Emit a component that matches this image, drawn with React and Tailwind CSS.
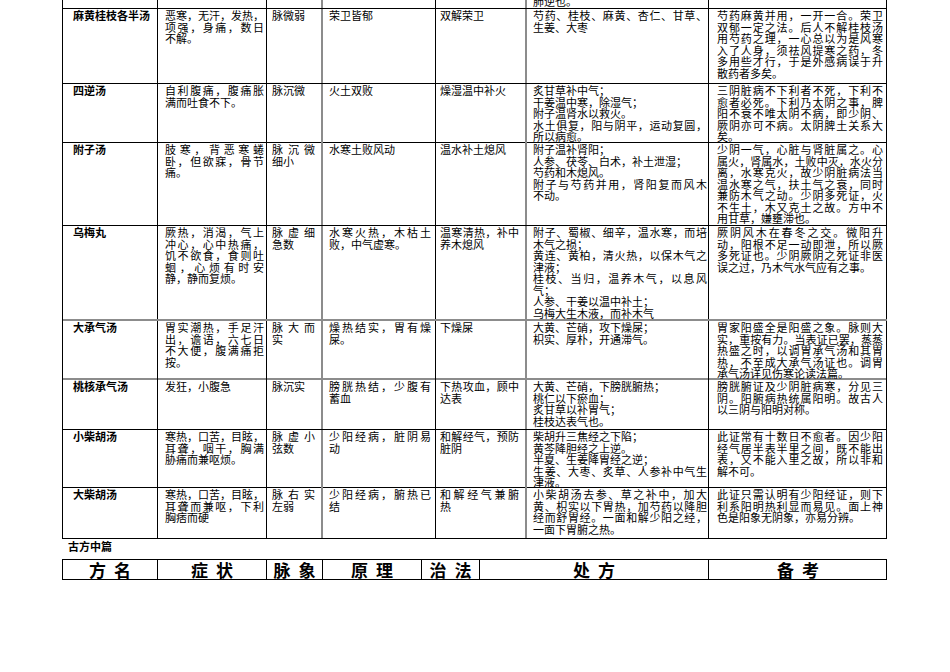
const col = [
  "border-r border-black pl-[10px] pr-[2px] font-bold",
  "border-r border-black pl-[7px] pr-[2px]",
  "border-r-2 border-r-[#8c8c8c] pl-[5px] pr-[6px]",
  "border-r border-black pl-[6px] pr-[4px]",
  "border-r-2 border-r-[#8c8c8c] pl-[4px] pr-[6px]",
  "border-r border-black pl-[6px] pr-[1px]",
  "border-r border-black pl-[8px] pr-[3px]",
];

// each cell: list of paragraphs, each paragraph a list of lines
const rows = [
  {
    h: "h-[75px] border-b border-black",
    cells: [
      [["麻黄桂枝各半汤"]],
      [["恶寒，无汗，发热，", "项强，身痛，数日", "不解。"]],
      [["脉微弱"]],
      [["荣卫皆郁"]],
      [["双解荣卫"]],
      [["芍药、桂枝、麻黄、杏仁、甘草、", "生姜、大枣"]],
      [["芍药麻黄并用，一开一合。荣卫", "双郁一定之法。后人不解桂枝汤", "用芍药之理，一心总以为是风寒", "入了人身，须祛风提寒之药，冬", "多用些才行，于是外感病误于升", "散药者多矣。"]],
    ],
  },
  {
    h: "h-[59px] border-b border-black",
    cells: [
      [["四逆汤"]],
      [["自利腹痛，腹痛胀", "满而吐食不下。"]],
      [["脉沉微"]],
      [["火土双败"]],
      [["燥湿温中补火"]],
      [["炙甘草补中气；"], ["干姜温中寒，除湿气；"], ["附子温肾水以救火。"], ["水土俱复，阳与阴平，运动复圆，", "所以病愈。"]],
      [["三阴脏病不下利者不死，下利不", "愈者必死。下利乃太阴之事，脾", "阳不衰不唯太阴不病，即少阴、", "厥阴亦可不病。太阴脾土关系大", "矣。"]],
    ],
  },
  {
    h: "h-[83px] border-b border-black",
    cells: [
      [["附子汤"]],
      [["肢寒，背恶寒蜷", "卧，但欲寐，骨节", "痛。"]],
      [["脉沉微", "细小"]],
      [["水寒土败风动"]],
      [["温水补土熄风"]],
      [["附子温补肾阳；"], ["人参、茯苓、白术，补土泄湿；"], ["芍药和木熄风。"], ["附子与芍药并用，肾阳复而风木", "不动。"]],
      [["少阴一气，心脏与肾脏属之。心", "属火，肾属水，土败中灭，水火分", "离，水寒克火，故少阴脏病法当", "温水寒之气，扶土气之衰，同时", "兼防木气之动。少阴多死证，火", "不生土，木又克土之故。方中不", "用甘草，嫌壅滞也。"]],
    ],
  },
  {
    h: "h-[95px] border-b-2 border-b-[#8c8c8c]",
    cells: [
      [["乌梅丸"]],
      [["厥热，消渴，气上", "冲心，心中热痛，", "饥不欲食，食则吐", "蛔，心烦有时安", "静，静而复烦。"]],
      [["脉虚细", "急数"]],
      [["水寒火热，木枯土", "败，中气虚寒。"]],
      [["温寒清热，补中", "养木熄风"]],
      [["附子、蜀椒、细辛，温水寒，而培", "木气之损；"], ["黄连、黄柏，清火热，以保木气之", "津液；"], ["桂枝、当归，温养木气，以息风", "气；"], ["人参、干姜以温中补土；"], ["乌梅大生木液，而补木气"]],
      [["厥阴风木在春冬之交。微阳升", "动，阳根不足一动即泄，所以厥", "多死证也。少阴厥阴之死证非医", "误之过，乃木气水气应有之事。"]],
    ],
  },
  {
    h: "h-[59px] border-b-2 border-b-[#8c8c8c]",
    cells: [
      [["大承气汤"]],
      [["胃实潮热，手足汗", "出，谵语，六七日", "不大便，腹满痛拒", "按。"]],
      [["脉大而", "实"]],
      [["燥热结实，胃有燥", "屎。"]],
      [["下燥屎"]],
      [["大黄、芒硝，攻下燥屎；"], ["枳实、厚朴，开通滞气。"]],
      [["胃家阳盛全是阳盛之象。脉则大", "实，重按有力。当表证已罢，蒸蒸", "热盛之时，以调胃承气汤和其胃", "热，不至成大承气汤证也。调胃", "承气汤详见伤寒论读法篇。"]],
    ],
  },
  {
    h: "h-[50px] border-b border-black",
    cells: [
      [["桃核承气汤"]],
      [["发狂，小腹急"]],
      [["脉沉实"]],
      [["膀胱热结，少腹有", "蓄血"]],
      [["下热攻血，顾中", "达表"]],
      [["大黄、芒硝，下膀胱腑热；"], ["桃仁以下瘀血；"], ["炙甘草以补胃气；"], ["桂枝达表气也。"]],
      [["膀胱腑证及少阴脏病寒，分见三", "阴。阳腑病热统属阳明。故古人", "以三阴与阳明对称。"]],
    ],
  },
  {
    h: "h-[58px] border-b border-black",
    cells: [
      [["小柴胡汤"]],
      [["寒热，口苦，目眩，", "耳聋，咽干，胸满", "胁痛而兼呕烦。"]],
      [["脉虚小", "弦数"]],
      [["少阳经病，脏阴易", "动"]],
      [["和解经气，预防", "脏阴"]],
      [["柴胡升三焦经之下陷；"], ["黄芩降胆经之上逆。"], ["半夏、生姜降胃经之逆；"], ["生姜、大枣、炙草、人参补中气生", "津液。"]],
      [["此证常有十数日不愈者。因少阳", "经气居半表半里之间，既不能出", "表，又不能入里之故，所以非和", "解不可。"]],
    ],
  },
  {
    h: "h-[51px] border-b border-black",
    cells: [
      [["大柴胡汤"]],
      [["寒热，口苦，目眩，", "耳聋而兼呕，下利", "胸痞而硬"]],
      [["脉右实", "左弱"]],
      [["少阳经病，腑热已", "结"]],
      [["和解经气兼腑", "热"]],
      [["小柴胡汤去参、草之补中，加大", "黄、枳实以下胃热，加芍药以降胆", "经而舒胃经。一面和解少阳之经，", "一面下胃腑之热。"]],
      [["此证只需认明有少阳经证，则下", "利系阳明热利显而易见。面上神", "色是阳象无阴象，亦易分辨。"]],
    ],
  },
];

const headers = [
  ["方", "名"],
  ["症", "状"],
  ["脉", "象"],
  ["原", "理"],
  ["治", "法"],
  ["处", "方"],
  ["备", "考"],
];

const Cell = ({ paras, className }) => (
  <div className={`pt-[1px] ${className}`}>
    {paras.map((lines, i) =>
      lines.map((l, j) => (
        <div
          key={i + "-" + j}
          className={
            j < lines.length - 1
              ? "whitespace-nowrap text-justify [text-align-last:justify]"
              : "whitespace-nowrap"
          }
        >
          {l}
        </div>
      ))
    )}
  </div>
);

const bodyGrid = "grid grid-cols-[95px_109px_56px_113px_91px_182px_178px]";

export default function App() {
  return (
    <div
      lang="zh-CN"
      className="w-[950px] h-[672px] bg-white text-black overflow-hidden text-[11px] leading-[11.5px]"
      style={{ fontFamily: '"Noto Sans CJK SC", "Noto Sans", sans-serif' }}
    >
      <div className="ml-[62px] w-[825px]">
        <div className="border-l border-black">
          {/* tail of the previous row */}
          <div className={`${bodyGrid} h-[9px] overflow-hidden border-b border-black`}>
            {col.map((c, i) => (
              <div key={i} className={c}>
                {i === 5 && <div className="mt-[-4px]">肺逆也。</div>}
              </div>
            ))}
          </div>
          {rows.map((r, i) => (
            <div key={i} className={`${bodyGrid} ${r.h}`}>
              {r.cells.map((paras, j) => (
                <Cell key={j} paras={paras} className={col[j]} />
              ))}
            </div>
          ))}
        </div>

        <div className="h-[20px] pt-[2px] pl-[6px] font-bold">古方中篇</div>

        <div className="grid grid-cols-[95px_109px_56px_99px_58px_229px_178px] h-[21px] border border-black">
          {headers.map((h, i) => (
            <div
              key={i}
              className={`flex items-center justify-center gap-[8px] text-[17px] leading-[19px] font-bold ${
                i < headers.length - 1 ? "border-r border-black" : ""
              }`}
            >
              <span>{h[0]}</span>
              <span>{h[1]}</span>
            </div>
          ))}
        </div>
      </div>
    </div>
  );
}
